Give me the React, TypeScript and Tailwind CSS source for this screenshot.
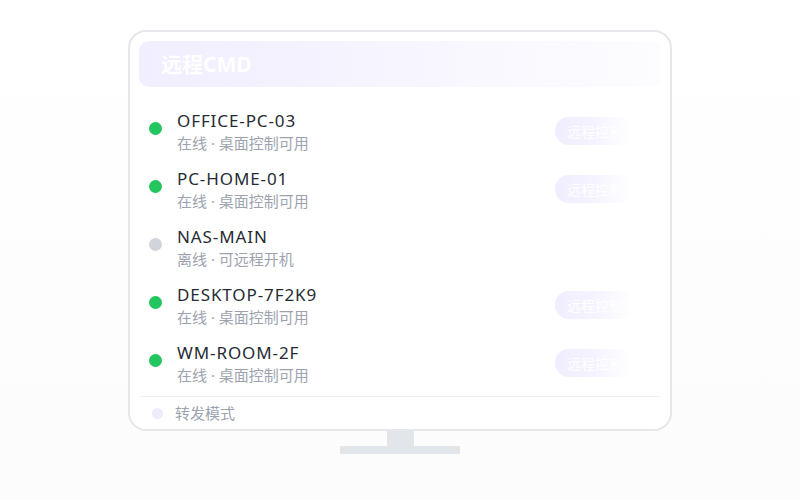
const devices = [
  { name: "OFFICE-PC-03", status: "在线 · 桌面控制可用", online: true },
  { name: "PC-HOME-01", status: "在线 · 桌面控制可用", online: true },
  { name: "NAS-MAIN", status: "离线 · 可远程开机", online: false },
  { name: "DESKTOP-7F2K9", status: "在线 · 桌面控制可用", online: true },
  { name: "WM-ROOM-2F", status: "在线 · 桌面控制可用", online: true },
]

function DeviceRow({ name, status, online }: { name: string; status: string; online: boolean }) {
  return (
    <div className="flex h-[44px] shrink-0 items-start">
      <div className={`ml-[10px] mt-[12px] h-[13px] w-[13px] shrink-0 rounded-full ${online ? "bg-[#22c55e]" : "bg-[#d1d5db]"}`} />
      <div className="ml-[15px] flex flex-1 flex-col">
        <span className="text-[17px] leading-[22px] tracking-[0.9px] text-[#262b33]">{name}</span>
        <span className="mt-[1px] text-[15px] leading-[20px] text-[#9ca3af]">{status}</span>
      </div>
      {online && (
        <div className="mr-[28px] mt-[7px] flex h-[28px] w-[78px] items-center rounded-full bg-gradient-to-r from-[#f0edff] via-[#f5f3ff] to-white pl-[12px] text-[14px] text-white">
          远程控制
        </div>
      )}
    </div>
  )
}

export default function App() {
  return (
    <div
      className="flex h-[500px] w-[800px] flex-col items-center bg-gradient-to-b from-white to-[#fcfcfd] pt-[30px]"
      style={{ fontFamily: '"Noto Sans", "Noto Sans CJK SC", sans-serif' }}
    >
      <div className="flex h-[401px] w-[544px] flex-col rounded-[18px] border-2 border-[#e5e7eb] bg-white p-[9px]">
        <div className="flex h-[46px] shrink-0 items-center rounded-[10px] bg-gradient-to-r from-[#f1eeff] via-[#f7f5ff] to-[#fdfdff] px-[22px] pt-[2px]">
          <span className="text-[21px] font-bold text-white">远程CMD</span>
        </div>
        <div className="mt-[23px] flex shrink-0 flex-col gap-[14px]">
          {devices.map((d) => (
            <DeviceRow key={d.name} {...d} />
          ))}
        </div>
        <div className="mt-[10px] h-px shrink-0 bg-[#f0f0f3]" />
        <div className="mt-[6px] flex shrink-0 items-center">
          <div className="ml-[13px] h-[11px] w-[11px] rounded-full bg-[#eeebfd]" />
          <span className="ml-[12px] text-[15px] leading-[20px] text-[#9ca3af]">转发模式</span>
        </div>
      </div>
      <div className="h-[15px] w-[27px] bg-[#e2e5e9]" />
      <div className="h-[8px] w-[120px] bg-[#e2e5e9]" />
    </div>
  )
}
